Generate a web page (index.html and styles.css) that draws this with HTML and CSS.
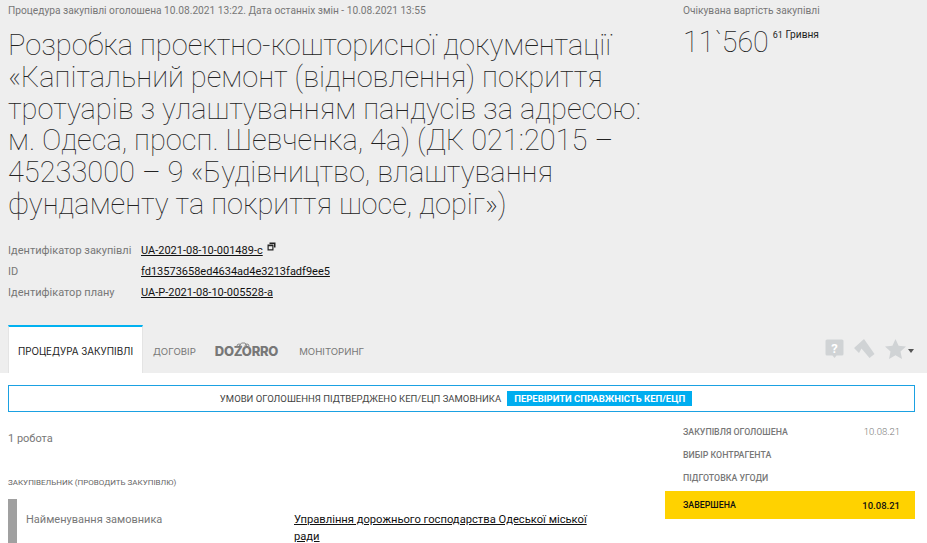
FILE: index.html
```html
<!DOCTYPE html>
<html lang="uk">

<head>
    <meta charset="UTF-8" />
    <title>Процедура закупівлі</title>
    <link rel="stylesheet" href="styles.css">
</head>

<body>
    <div class="tender-head">
        <div class="head-top">
            <div class="head-main">
                <p class="tender-dates">Процедура закупівлі оголошена 10.08.2021 13:22. Дата останніх змін - 10.08.2021 13:55</p>
                <h1>Розробка проектно-кошторисної документації «Капітальний ремонт (відновлення) покриття тротуарів з улаштуванням пандусів за адресою: м. Одеса, просп. Шевченка, 4а) (ДК 021:2015 – 45233000 – 9 «Будівництво, влаштування фундаменту та покриття шосе, доріг»)</h1>
                <div class="tender-ids">
                    <span class="id-label">Ідентифікатор закупівлі</span>
                    <span><a href="#">UA-2021-08-10-001489-c</a>
                        <svg class="copy-icon" width="9" height="9" viewBox="0 0 9 9">
                            <path d="M2.5 0.5h6v5h-1.500v-3.500h-4.500z" fill="#222" />
                            <path d="M0.500 2.500h6v6h-6z M1.700 4.200v3.100h3.600v-3.100z" fill="#222" fill-rule="evenodd" />
                        </svg>
                    </span>
                    <span class="id-label">ID</span>
                    <span><a href="#">fd13573658ed4634ad4e3213fadf9ee5</a></span>
                    <span class="id-label">Ідентифікатор плану</span>
                    <span><a href="#">UA-P-2021-08-10-005528-a</a></span>
                </div>
            </div>
            <div class="head-price">
                <p class="price-label">Очікувана вартість закупівлі</p>
                <p class="price-value">11`560<span class="price-rest"><sup>61</sup> Гривня</span></p>
            </div>
        </div>
        <div class="tabs">
            <a class="tab active" href="#">Процедура закупівлі</a>
            <a class="tab" href="#">Договір</a>
            <a class="tab tab-logo" href="#">
                <span>DOZORRO</span>
                <svg class="logo-bike" width="16" height="6" viewBox="0 0 16 6">
                    <circle cx="4" cy="4" r="2" fill="none" stroke="#888" stroke-width="1" />
                    <circle cx="12" cy="4" r="2" fill="none" stroke="#888" stroke-width="1" />
                    <path d="M4 4 6.500 1h3.500l2 3" fill="none" stroke="#888" stroke-width="1" />
                </svg>
            </a>
            <a class="tab" href="#">Моніторинг</a>
            <div class="tab-icons">
                <svg width="19" height="20" viewBox="0 0 19 20">
                    <path d="M2 0.500h15a1.500 1.500 0 0 1 1.500 1.500v13a1.500 1.500 0 0 1-1.500 1.500h-5.500l-2 2.500-2-2.500h-5.500a1.500 1.500 0 0 1-1.500-1.500v-13a1.500 1.500 0 0 1 1.500-1.500z" fill="#d0d3d5" />
                    <text x="9.500" y="13.500" class="help-mark">?</text>
                </svg>
                <svg width="21" height="20" viewBox="0 0 21 20">
                    <path d="M0 9 10 0 20.500 15 15.500 19 7.500 9.500 5 14z" fill="#d0d3d5" />
                </svg>
                <svg class="star-icon" width="21" height="20" viewBox="0 0 21 20">
                    <path d="M10.500 0 13.600 6.800 21 7.600 15.500 12.600 17 20 10.500 16.300 4 20 5.500 12.600 0 7.600 7.400 6.800z" fill="#d0d3d5" />
                </svg>
                <span class="star-caret"></span>
            </div>
        </div>
    </div>

    <div class="sign-bar">
        <span>Умови оголошення підтверджено КЕП/ЕЦП замовника</span>
        <a class="sign-check" href="#">Перевірити справжність КЕП/ЕЦП</a>
    </div>

    <div class="tender-body">
        <div class="body-main">
            <p class="lots">1 робота</p>
            <p class="section-title">Закупівельник (проводить закупівлю)</p>
            <div class="info-block">
                <span class="info-label">Найменування замовника</span>
                <a class="info-value" href="#">Управління дорожнього господарства Одеської міської ради</a>
            </div>
        </div>
        <ul class="stages">
            <li><span>Закупівля оголошена</span><span class="stage-date">10.08.21</span></li>
            <li><span>Вибір контрагента</span></li>
            <li><span>Підготовка угоди</span></li>
            <li class="current"><span>Завершена</span><span class="stage-date">10.08.21</span></li>
        </ul>
    </div>
</body>

</html>
```

FILE: styles.css
```css
/* Base Styles */
html,
body {
    height: 543px;
    overflow: hidden;
}

body {
    margin: 0;
    background-color: #fff;
    font-family: Roboto, "Liberation Sans", sans-serif;
    color: #222;
}

p,
h1,
ul {
    margin: 0;
    padding: 0;
}

a {
    color: #111;
}

/* Grey header */
.tender-head {
    height: 373px;
    background-color: #eee;
    display: flex;
    flex-direction: column;
    box-sizing: border-box;
    padding-left: 8px;
}

.head-top {
    flex: 1;
    display: flex;
}

.head-main {
    width: 675px;
    padding-top: 4px;
    box-sizing: border-box;
}

.tender-dates {
    font-size: 10.200px;
    line-height: 13px;
    color: #777;
}

h1 {
    margin-top: 13px;
    width: 640px;
    font-size: 29px;
    line-height: 31.800px;
    font-weight: 100;
    color: #222;
}

.tender-ids {
    margin-top: 19px;
    display: grid;
    grid-template-columns: 133px 1fr;
    font-size: 11px;
    line-height: 21px;
}

.id-label {
    color: #777;
}

.copy-icon {
    vertical-align: 3px;
    margin-left: 2px;
}

/* Price */
.head-price {
    padding-top: 4px;
}

.price-label {
    font-size: 10.200px;
    line-height: 13px;
    color: #777;
}

.price-value {
    margin-top: 7px;
    font-size: 28.600px;
    line-height: 36px;
    font-weight: 100;
    color: #222;
    display: flex;
    align-items: flex-start;
}

.price-rest {
    font-size: 10.200px;
    line-height: 14px;
    font-weight: 400;
    margin-left: 4px;
    margin-top: 4px;
}

.price-rest sup {
    font-size: 9px;
    vertical-align: baseline;
}

/* Tabs */
.tabs {
    height: 48px;
    display: flex;
    align-items: stretch;
}

.tab {
    display: flex;
    align-items: center;
    padding: 4px 10px 0;
    font-family: Inter, Roboto, sans-serif;
    font-size: 9.600px;
    text-transform: uppercase;
    text-decoration: none;
    color: #777;
}

.tab.active {
    width: 135px;
    padding: 2px 0 0;
    justify-content: center;
    background-color: #fff;
    border-top: 2px solid #00b1f0;
    border-left: 1px solid #e4e4e4;
    border-right: 1px solid #e4e4e4;
    font-size: 9.800px;
    color: #222;
    box-sizing: border-box;
}

.tab-logo {
    position: relative;
    padding: 4px 11px 0 9px;
    font-size: 13px;
    font-weight: 800;
    letter-spacing: -0.250px;
}

.logo-bike {
    position: absolute;
    left: 29px;
    top: 17px;
}

.tab-icons {
    margin-left: auto;
    display: flex;
    align-items: center;
    gap: 10px;
    padding-right: 13px;
}

.help-mark {
    font-family: Roboto, sans-serif;
    font-size: 13px;
    font-weight: 700;
    fill: #fff;
    text-anchor: middle;
}

.star-caret {
    width: 0;
    height: 0;
    margin-left: -8px;
    margin-top: 4px;
    border-top: 4px solid #555;
    border-left: 3px solid transparent;
    border-right: 3px solid transparent;
}

/* Signature bar */
.sign-bar {
    margin: 12px 12px 0 8px;
    height: 27px;
    border: 1px solid #1ba1e2;
    display: flex;
    align-items: center;
    justify-content: center;
    gap: 6px;
    box-sizing: border-box;
    padding-right: 11px;
    font-size: 9.500px;
    text-transform: uppercase;
    color: #444;
}

.sign-check {
    padding: 2px 7px;
    background-color: #00adef;
    color: #fff;
    font-weight: 700;
    text-decoration: none;
}

/* Body */
.tender-body {
    display: flex;
}

.body-main {
    width: 665px;
    padding-left: 8px;
    box-sizing: border-box;
}

.lots {
    margin-top: 20px;
    font-size: 11px;
    line-height: 13px;
    color: #777;
}

.section-title {
    margin-top: 33px;
    font-size: 8px;
    line-height: 10px;
    text-transform: uppercase;
    color: #666;
}

.info-block {
    margin-top: 11px;
    height: 60px;
    border-left: 9px solid #a0a0a0;
    display: grid;
    grid-template-columns: 268px 300px;
    padding: 12px 0 0 9px;
    box-sizing: border-box;
    font-size: 11px;
    line-height: 17px;
}

.info-label {
    color: #777;
}

.info-value {
    font-size: 11.200px;
}

/* Stages */
.stages {
    list-style: none;
    width: 250px;
    margin-top: 8px;
}

.stages li {
    height: 23px;
    display: flex;
    align-items: center;
    justify-content: space-between;
    padding: 0 15px 0 18px;
    font-size: 8.800px;
    font-weight: 500;
    text-transform: uppercase;
    color: #777;
}

.stage-date {
    font-size: 9.500px;
    font-weight: 300;
}

.stages li.current {
    height: 28px;
    margin-top: 2px;
    background-color: #ffd200;
    color: #111;
}

.stages li.current .stage-date {
    font-weight: 500;
}
```
